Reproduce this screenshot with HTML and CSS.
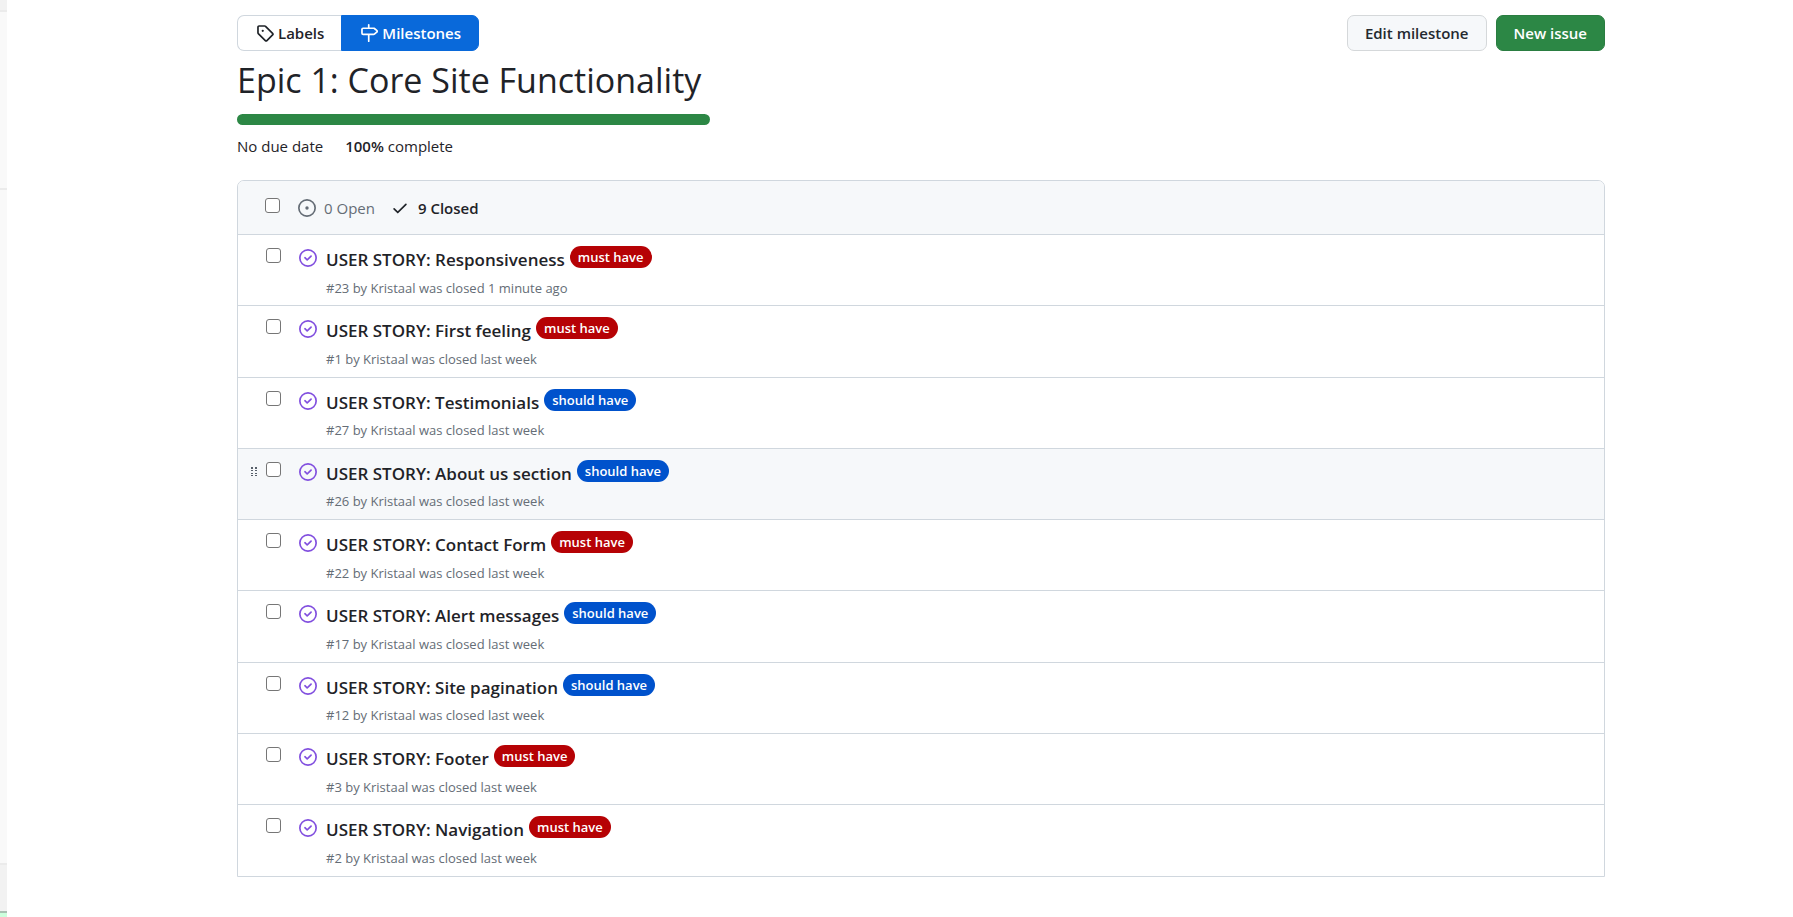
FILE: index.html
```html
<!DOCTYPE html>
<html lang="en">
<head>
<meta charset="utf-8">
<meta name="viewport" content="width=device-width, initial-scale=1">
<title>Epic 1: Core Site Functionality</title>
<link rel="stylesheet" href="styles.css">
</head>
<body>
<svg class="sprite" aria-hidden="true">
  <symbol id="closed" viewBox="0 0 16 16"><path d="M11.28 6.78a.75.75 0 0 0-1.06-1.06L7.25 8.69 5.78 7.22a.75.75 0 0 0-1.06 1.06l2 2a.75.75 0 0 0 1.06 0l3.5-3.5Z"/><path d="M16 8A8 8 0 1 1 0 8a8 8 0 0 1 16 0Zm-1.5 0a6.5 6.5 0 1 0-13 0 6.5 6.5 0 0 0 13 0Z"/></symbol>
</svg>
<div class="page">
  <div class="edge" aria-hidden="true"><div class="edge-top"></div><div class="edge-upper"></div><div class="edge-main"></div><div class="edge-lower"></div><div class="edge-end"></div></div>
  <main class="content">
    <header class="toolbar">
      <nav class="subnav">
        <a class="tab" href="#labels"><svg class="icon" viewBox="0 0 16 16"><path d="M1 7.775V2.75C1 1.784 1.784 1 2.75 1h5.025c.464 0 .91.184 1.238.513l6.25 6.25a1.75 1.75 0 0 1 0 2.474l-5.026 5.026a1.75 1.75 0 0 1-2.474 0l-6.25-6.25A1.752 1.752 0 0 1 1 7.775Zm1.5 0c0 .066.026.13.073.177l6.25 6.25a.25.25 0 0 0 .354 0l5.025-5.025a.25.25 0 0 0 0-.354l-6.25-6.25a.25.25 0 0 0-.177-.073H2.75a.25.25 0 0 0-.25.25ZM6 5a1 1 0 1 1 0 2 1 1 0 0 1 0-2Z"/></svg>Labels</a>
        <a class="tab tab-selected" href="#milestones"><svg class="icon" viewBox="0 0 16 16"><path d="M7.75 0a.75.75 0 0 1 .75.75V3h3.634c.414 0 .814.147 1.13.414l2.07 1.75a1.75 1.75 0 0 1 0 2.672l-2.07 1.75a1.75 1.75 0 0 1-1.13.414H8.5v5.25a.75.75 0 0 1-1.5 0V10H2.75A1.75 1.75 0 0 1 1 8.25v-3.5C1 3.784 1.784 3 2.75 3H7V.75A.75.75 0 0 1 7.75 0Zm4.384 8.5a.25.25 0 0 0 .161-.06l2.07-1.75a.248.248 0 0 0 0-.38l-2.07-1.75a.25.25 0 0 0-.161-.06H2.75a.25.25 0 0 0-.25.25v3.5c0 .138.112.25.25.25h9.384Z"/></svg>Milestones</a>
      </nav>
      <div class="actions">
        <button class="button" type="button">Edit milestone</button>
        <button class="button button-primary" type="button">New issue</button>
      </div>
    </header>
    <section class="summary">
      <h1 class="heading">Epic 1: Core Site Functionality</h1>
      <div class="progress" role="progressbar" aria-label="Milestone progress" aria-valuenow="100"><div class="progress-fill" style="width: 100%"></div></div>
      <div class="facts"><span>No due date</span><span><b>100%</b> complete</span></div>
    </section>
    <section class="box">
      <div class="box-header">
        <input class="check" type="checkbox" aria-label="Select all issues">
        <a class="state" href="#open"><svg class="state-icon" viewBox="0 0 16 16"><path d="M8 9.5a1.5 1.5 0 1 0 0-3 1.5 1.5 0 0 0 0 3Z"/><path d="M8 0a8 8 0 1 1 0 16A8 8 0 0 1 8 0ZM1.500 8a6.500 6.500 0 1 0 13 0 6.500 6.500 0 0 0-13 0Z"/></svg>0 Open</a>
        <a class="state state-selected" href="#closed-issues"><svg class="state-icon" viewBox="0 0 16 16"><path d="M13.780 4.220a.75.75 0 0 1 0 1.060l-7.250 7.250a.75.75 0 0 1-1.060 0L2.220 9.280a.751.751 0 0 1 .018-1.042.751.751 0 0 1 1.042-.018L6 10.940l6.720-6.720a.75.75 0 0 1 1.060 0Z"/></svg>9 Closed</a>
      </div>
      <ul class="issues">
        <li class="issue"><input class="check" type="checkbox" aria-label="Select issue 23"><svg class="issue-icon"><use href="#closed"/></svg><div class="issue-body"><div class="issue-line"><a class="issue-title" href="#23">USER STORY: Responsiveness</a><a class="label must" href="#must">must have</a></div><p class="meta">#23 by Kristaal was closed 1 minute ago</p></div></li>
        <li class="issue"><input class="check" type="checkbox" aria-label="Select issue 1"><svg class="issue-icon"><use href="#closed"/></svg><div class="issue-body"><div class="issue-line"><a class="issue-title" href="#1">USER STORY: First feeling</a><a class="label must" href="#must">must have</a></div><p class="meta">#1 by Kristaal was closed last week</p></div></li>
        <li class="issue"><input class="check" type="checkbox" aria-label="Select issue 27"><svg class="issue-icon"><use href="#closed"/></svg><div class="issue-body"><div class="issue-line"><a class="issue-title" href="#27">USER STORY: Testimonials</a><a class="label should" href="#should">should have</a></div><p class="meta">#27 by Kristaal was closed last week</p></div></li>
        <li class="issue issue-active"><svg class="grip" viewBox="0 0 6 10"><path d="M0 0h2v2H0zM4 0h2v2H4zM0 3h2v1H0zM4 3h2v1H4zM0 6h2v1H0zM4 6h2v1H4zM0 8h2v1H0zM4 8h2v1H4z"/></svg><input class="check" type="checkbox" aria-label="Select issue 26"><svg class="issue-icon"><use href="#closed"/></svg><div class="issue-body"><div class="issue-line"><a class="issue-title" href="#26">USER STORY: About us section</a><a class="label should" href="#should">should have</a></div><p class="meta">#26 by Kristaal was closed last week</p></div></li>
        <li class="issue"><input class="check" type="checkbox" aria-label="Select issue 22"><svg class="issue-icon"><use href="#closed"/></svg><div class="issue-body"><div class="issue-line"><a class="issue-title" href="#22">USER STORY: Contact Form</a><a class="label must" href="#must">must have</a></div><p class="meta">#22 by Kristaal was closed last week</p></div></li>
        <li class="issue"><input class="check" type="checkbox" aria-label="Select issue 17"><svg class="issue-icon"><use href="#closed"/></svg><div class="issue-body"><div class="issue-line"><a class="issue-title" href="#17">USER STORY: Alert messages</a><a class="label should" href="#should">should have</a></div><p class="meta">#17 by Kristaal was closed last week</p></div></li>
        <li class="issue"><input class="check" type="checkbox" aria-label="Select issue 12"><svg class="issue-icon"><use href="#closed"/></svg><div class="issue-body"><div class="issue-line"><a class="issue-title" href="#12">USER STORY: Site pagination</a><a class="label should" href="#should">should have</a></div><p class="meta">#12 by Kristaal was closed last week</p></div></li>
        <li class="issue"><input class="check" type="checkbox" aria-label="Select issue 3"><svg class="issue-icon"><use href="#closed"/></svg><div class="issue-body"><div class="issue-line"><a class="issue-title" href="#3">USER STORY: Footer</a><a class="label must" href="#must">must have</a></div><p class="meta">#3 by Kristaal was closed last week</p></div></li>
        <li class="issue"><input class="check" type="checkbox" aria-label="Select issue 2"><svg class="issue-icon"><use href="#closed"/></svg><div class="issue-body"><div class="issue-line"><a class="issue-title" href="#2">USER STORY: Navigation</a><a class="label must" href="#must">must have</a></div><p class="meta">#2 by Kristaal was closed last week</p></div></li>
      </ul>
    </section>
  </main>
</div>
</body>
</html>
```
FILE: styles.css
```css
* { box-sizing: border-box; }
body { margin: 0; background: #fff; color: #1f2328; font: 15px/24px "Segoe UI", "Open Sans", "Noto Sans", sans-serif; }
a { color: inherit; text-decoration: none; }
svg { display: block; flex: none; fill: currentColor; }
.sprite { position: absolute; width: 0; height: 0; }
.page { display: flex; min-height: 100vh; }

.edge { display: flex; flex-direction: column; width: 7px; flex: none; background: #f9f9f9; }
.edge-top { height: 12px; background: #f2f2f2; border-bottom: 2px solid #ebebeb; }
.edge-upper { height: 178px; border-bottom: 2px solid #ebebeb; }
.edge-main { flex: 1; }
.edge-lower { height: 48px; background: #f2f2f2; border-top: 2px solid #ebebeb; }
.edge-end { height: 6px; background: #ccffdd; border-top: 2px solid #a9c1b2; }

.content { flex: 1; min-width: 0; padding: 15px 188px 39px 230px; }
.toolbar { display: flex; justify-content: space-between; }
.subnav, .actions { display: flex; }
.actions { gap: 9px; }
.tab, .button { display: flex; align-items: center; height: 36px; border: 1px solid #d0d7de; font-family: inherit; font-size: 15px; font-weight: 600; line-height: 22px; }
.tab { gap: 4px; padding: 0 17px 0 18px; border-radius: 7px 0 0 7px; border-right: 0; }
.tab-selected { border: 1px solid #0969da; border-radius: 0 7px 7px 0; background: #0969da; color: #fff; }
.icon { width: 18px; height: 18px; }
.button { justify-content: center; padding: 0 17px; border-color: #d5d8da; border-radius: 7px; background: #f6f8fa; color: #24292f; }
.button-primary { border-color: #2a7d41; background: #2c8745; color: #fff; }

.heading { margin: 8px 0 12px; font-size: 34px; font-weight: 400; line-height: 43px; }
.summary { width: fit-content; }
.progress { width: 473px; max-width: 100%; height: 11px; border-radius: 6px; overflow: hidden; background: #eaeef2; }
.progress-fill { height: 100%; background: #2c8745; }
.facts { display: flex; gap: 22px; padding: 9px 0 22px; font-size: 15px; }
b { font-weight: 600; }

.box { border: 1px solid #d0d7de; border-radius: 7px 7px 0 0; overflow: hidden; }
.box-header { display: flex; align-items: center; height: 53px; padding-left: 27px; background: #f6f8fa; }
.check { appearance: none; flex: none; width: 15px; height: 15px; margin: 0; border: 1px solid #767676; border-radius: 3px; background: #fff; }
.box-header .check { margin: 0 18px 4px 0; }
.state { display: flex; align-items: center; gap: 8px; margin-right: 16px; color: #656d76; }
.state-selected { gap: 9px; color: #1f2328; font-weight: 600; }
.state-icon { width: 18px; height: 18px; }

.issues { margin: 0; padding: 0; list-style: none; }
.issue { position: relative; display: flex; align-items: flex-start; padding: 10px 18px 7px 28px; border-top: 1px solid #d0d7de; }
.issue-active { background: #f6f8fa; }
.issue .check { margin-top: 3px; }
.issue-icon { width: 18px; height: 18px; margin: 4px 9px 0 18px; color: #8250df; }
.issue-line { display: flex; align-items: flex-start; gap: 5px; }
.issue-title { padding-top: 2px; font-size: 17px; font-weight: 600; line-height: 1.5; }
.label { height: 22px; margin-top: 1px; padding: 0 8px; border-radius: 11px; color: #fff; font-size: 13px; font-weight: 600; line-height: 22px; }
.must { background: #b60205; }
.should { background: #0052cc; }
.meta { margin: 5px 0 0; color: #656d76; font-size: 13px; line-height: 1.6; }
.grip { position: absolute; top: 18px; left: 13px; width: 6px; height: 10px; color: #57606a; }
```
